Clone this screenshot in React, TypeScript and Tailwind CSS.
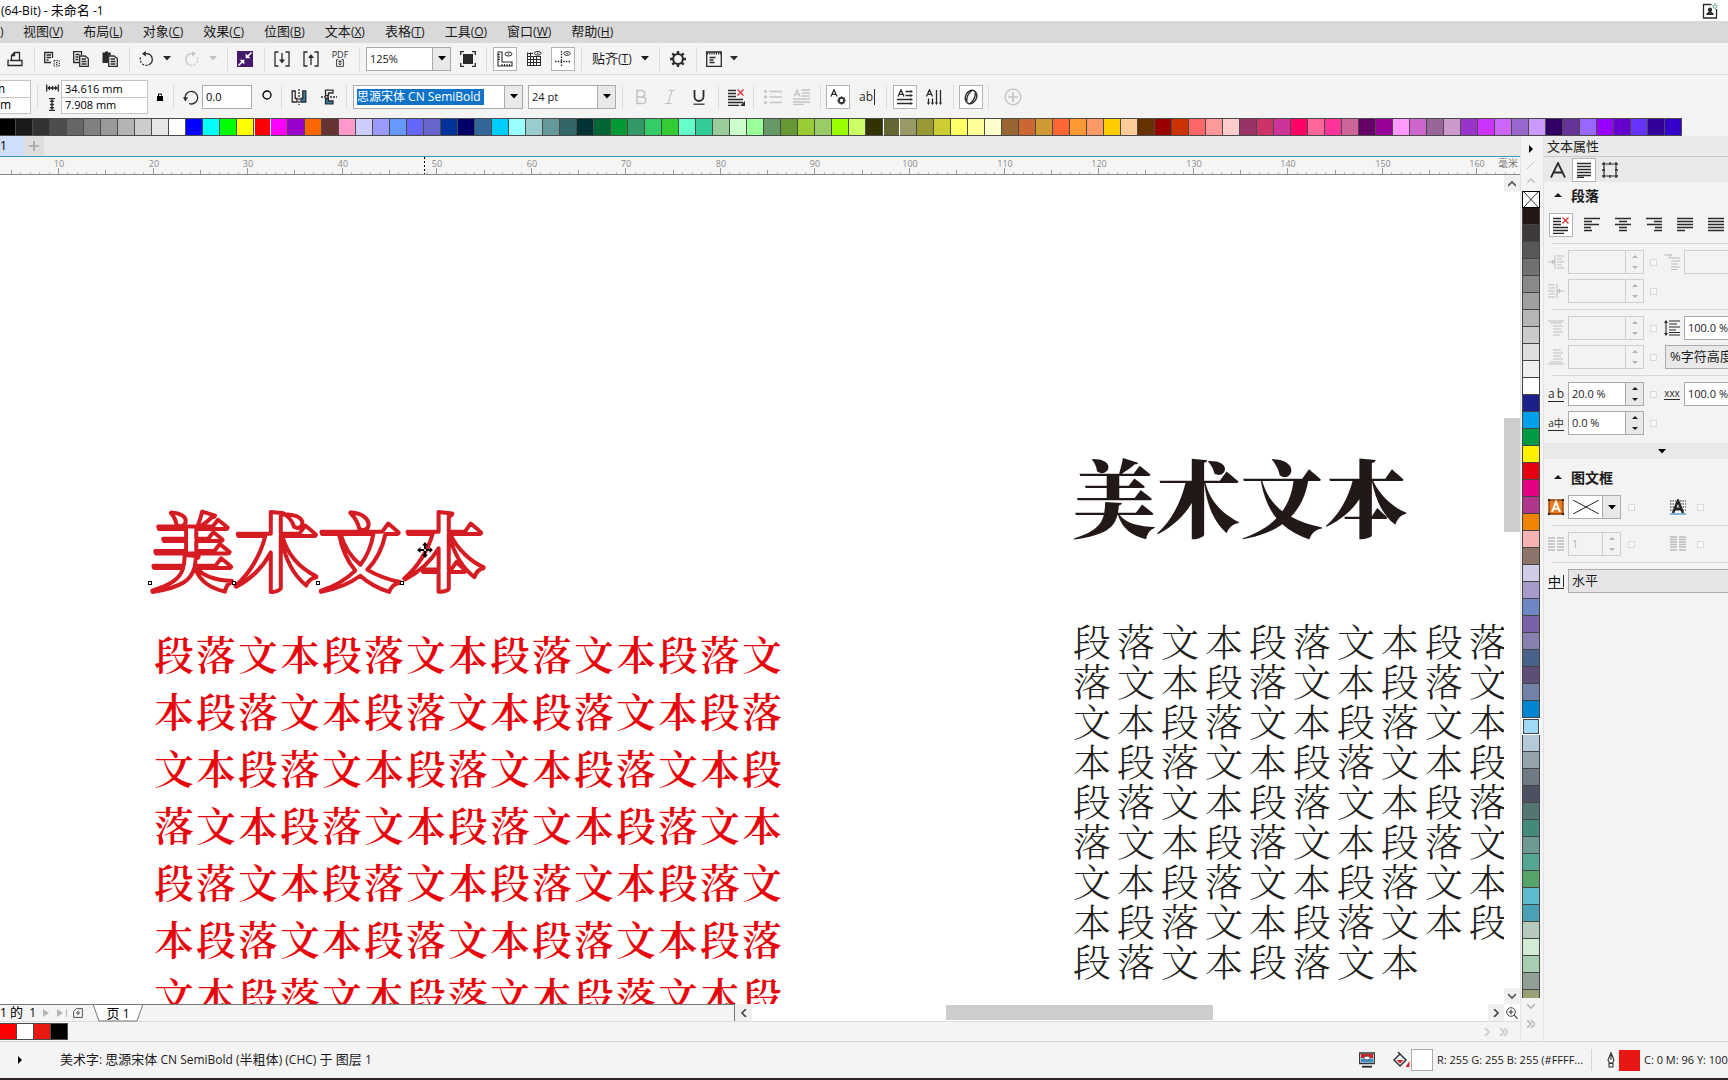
import React from 'react';

const TOP_COLORS = [
  '#000000', '#1a1a1a', '#333333', '#4d4d4d', '#666666', '#808080', '#999999', '#b3b3b3', '#cccccc', '#e6e6e6',
  '#ffffff', '#0000ff', '#00ffff', '#00ff00', '#ffff00', '#ff0000', '#ff00ff', '#9900cc', '#ff6600', '#663333',
  '#ff99cc', '#ccccff', '#9999ff', '#6699ff', '#6666ff', '#6666cc', '#003399', '#000066', '#336699', '#00ccff',
  '#99ffff', '#99cccc', '#669999', '#336666', '#003333', '#006633', '#009933', '#339966', '#33cc66', '#33cc33',
  '#66ffcc', '#33cc99', '#99cc99', '#ccffcc', '#99ff99', '#669966', '#669933', '#99cc33', '#99cc66', '#99ff00',
  '#ccff66', '#333300', '#666633', '#999966', '#999933', '#cccc33', '#ffff66', '#ffff99', '#ffffcc', '#996633',
  '#cc6633', '#cc9933', '#ff6633', '#ff9933', '#ff9966', '#ffcc00', '#ffcc99', '#663300', '#990000', '#cc3300',
  '#ff6666', '#ff9999', '#ffcccc', '#993366', '#cc3366', '#cc3399', '#ff0066', '#ff6699', '#ff3399', '#cc6699',
  '#660066', '#990099', '#ff99ff', '#cc66cc', '#996699', '#cc99cc', '#9933cc', '#cc33ff', '#cc66ff', '#9966cc',
  '#cc99ff', '#330066', '#663399', '#9966ff', '#9900ff', '#6600cc', '#6633ff', '#330099', '#3300cc',
];

const SIDE_COLORS = [
  '#231815', '#3e3a39', '#595757', '#727171', '#898989', '#9fa0a0', '#b5b5b6', '#c9caca', '#dcdddd', '#efefef',
  '#ffffff', '#1d2088', '#00a0e9', '#009944', '#fff100', '#e60012', '#e4007f', '#b0368b', '#f08300', '#f5b2b2',
  '#8c746a', '#d0cbe6', '#a59aca', '#6c87c4', '#7a62a8', '#8a80b0', '#49628c', '#5c4e75', '#7380a8', '#0086d1',
  '#9fd9f6', '#b5cad6', '#93a5ab', '#6f7b85', '#4b5160', '#537672', '#43897c', '#6f9995', '#55a795', '#56a469',
  '#5cbbcc', '#4aa0b4', '#b5cabd', '#d3ead3', '#a5cfae', '#91a096', '#9aa076',
];

const DOC_COLORS = ['#ff0000', '#ffffff', '#e8190f', '#000000'];

const MENUS = [
  ['视图', 'V'], ['布局', 'L'], ['对象', 'C'], ['效果', 'C'], ['位图', 'B'],
  ['文本', 'X'], ['表格', 'T'], ['工具', 'O'], ['窗口', 'W'], ['帮助', 'H'],
];

const LEFT_LINES = [
  '段落文本段落文本段落文本段落文',
  '本段落文本段落文本段落文本段落',
  '文本段落文本段落文本段落文本段',
  '落文本段落文本段落文本段落文本',
  '段落文本段落文本段落文本段落文',
  '本段落文本段落文本段落文本段落',
  '文本段落文本段落文本段落文本段',
];

const RIGHT_LINES = [
  '段落文本段落文本段落',
  '落文本段落文本段落文',
  '文本段落文本段落文本',
  '本段落文本段落文本段',
  '段落文本段落文本段落',
  '落文本段落文本段落文',
  '文本段落文本段落文本',
  '本段落文本段落文本段',
  '段落文本段落文本',
];

// ---------- icons ----------

interface IconProps {
  children: React.ReactNode;
  className?: string;
  box?: string;
}

const Icon: React.FC<IconProps> = ({ children, className = 'size-4', box = '0 0 16 16' }) => (
  <svg viewBox={box} className={`block shrink-0 ${className}`} fill="none" stroke="currentColor" strokeWidth="1.3" aria-hidden="true">
    {children}
  </svg>
);

const Caret = ({ className = '' }: { className?: string }) => (
  <svg viewBox="0 0 8 5" className={`block h-[5px] w-2 shrink-0 ${className}`} fill="currentColor" aria-hidden="true">
    <path d="M0 0h8L4 4.6z" />
  </svg>
);

const PrintIcon = () => (
  <Icon><path d="M4.5 9.500V4.500L7.500 1.500H12.500V9.500M7.500 1.500V4.500H4.500M2 9.500H1V14.500H15V9.500H13M3 9.500H14" /></Icon>
);
const CutIcon = () => (
  <Icon>
    <path d="M7 11.500H.7V1.500H8.500V7M2.500 4h4.500M2.500 6.500h4.500M2.500 9h2" />
    <path d="M10 9.500h5.300v5.500H10zM12 11.500h1.500M12 13.300h1.500" strokeDasharray="1.500 1" strokeWidth="1" />
  </Icon>
);
const CopyIcon = () => (
  <Icon>
    <path d="M6 11.500H.7V.7H8.500V4M2.500 3.500h4M2.500 6h3M2.500 8.500h3" />
    <path d="M6.700 5H12l3.300 2.500v7.800H6.700zM8.500 8h4.500M8.500 10.500h5M8.500 13h5" />
  </Icon>
);
const PasteIcon = () => (
  <Icon>
    <path d="M.5 1.500h2.500V.4h3V1.500h2.700V4.500H6V12H.5z" fill="currentColor" stroke="none" />
    <path d="M6.700 5H12l3.300 2.500v7.800H6.700zM8.500 8h4.500M8.500 10.500h5M8.500 13h5" />
  </Icon>
);
const UndoIcon = () => (
  <Icon>
    <path d="M7 2.700h2a5.800 5.800 0 0 1 1.500 11.200" />
    <path d="M9.500 14.300H8A6 6 0 0 1 2.500 6.500" strokeDasharray="2 1.500" />
    <path d="M7.800 0v5.400L4 2.700z" fill="currentColor" stroke="none" />
  </Icon>
);
const RedoIcon = () => (
  <Icon>
    <path d="M9 2.700H7a5.800 5.800 0 0 0-1.500 11.200" />
    <path d="M6.500 14.300H8a6 6 0 0 0 5.500-7.800" strokeDasharray="2 1.500" />
    <path d="M8.200 0v5.400L12 2.700z" fill="currentColor" stroke="none" />
  </Icon>
);
const LaunchIcon = () => (
  <Icon>
    <path d="M0 0h16v16H0z" fill="#46196b" stroke="none" />
    <path d="M14.500 1.500 10.500 5.500M1.500 14.500 5.500 10.500" stroke="#fff" strokeWidth="1.600" />
    <path d="M8.700 2.500v4.800h4.800zM2.500 8.700h4.800v4.800z" fill="#fff" stroke="none" />
  </Icon>
);
const ImportIcon = () => (
  <Icon><path d="M4.500 1H1v14h3.500M11.500 1H15v14h-3.500M8 2v9" /><path d="M5 8.500h6L8 12.500z" fill="currentColor" stroke="none" /></Icon>
);
const ExportIcon = () => (
  <Icon><path d="M4.500 1H1v14h3.500M11.500 1H15v14h-3.500M8 5v9" /><path d="M5 7h6L8 3z" fill="currentColor" stroke="none" /></Icon>
);
const PdfIcon = () => (
  <span className="flex w-4 flex-col items-center text-[9px] leading-[8px]">
    PDF
    <Icon className="size-2" box="0 0 8 8"><path d="M2.500.6H.6v6.800h6.800V.6H5.500M4 1v5M2.500 4.500 4 6l1.500-1.500M2.500 2.500h3" strokeWidth=".9" /></Icon>
  </span>
);
const FullScreenIcon = () => (
  <Icon><path d="M3 3h10v10H3z" fill="currentColor" stroke="none" /><path d="M.7 4V.7H4M12 .7h3.300V4M15.300 12v3.300H12M4 15.300H.7V12" /></Icon>
);
const RulerIcon = () => (
  <Icon>
    <path d="M1 1h4v10h10v4H1zM1 3.500h2M1 6h2M1 8.500h2M5 15v-2M7.500 15v-2M10 15v-2M12.500 15v-2" strokeWidth="1.100" />
    <ellipse cx="11.500" cy="3" rx="3.500" ry="2" strokeWidth="1" /><circle cx="11.500" cy="3" r=".8" fill="currentColor" stroke="none" />
  </Icon>
);
const GridIcon = () => (
  <Icon>
    <path d="M1 2.500h6M1 5.500h14M1 8.500h14M1 11.500h14M1 14.500h14M1.500 1.500V15M4.500 1.500V15M7.500 5.500V15M10.500 5.500V15M14.500 5.500V15" strokeWidth="1" />
    <ellipse cx="11.700" cy="2.300" rx="3.300" ry="1.800" strokeWidth="1" /><circle cx="11.700" cy="2.300" r=".7" fill="currentColor" stroke="none" />
  </Icon>
);
const GuideIcon = () => (
  <Icon>
    <path d="M6.500 0v16M0 10.500h16" strokeDasharray="1.500 1.200" />
    <ellipse cx="12" cy="2.500" rx="3.300" ry="1.800" strokeWidth="1" /><circle cx="12" cy="2.500" r=".7" fill="currentColor" stroke="none" />
  </Icon>
);
const GearIcon = () => (
  <Icon>
    <circle cx="8" cy="8" r="4.900" strokeWidth="2" />
    <path d="M8 0v3M8 13v3M0 8h3M13 8h3M2.300 2.300l2 2M11.700 11.700l2 2M13.700 2.300l-2 2M4.300 11.700l-2 2" strokeWidth="2.400" />
  </Icon>
);
const WindowIcon = () => (
  <Icon><path d="M.7 1h14.600v14.300H.7zM3.500 6.500h6M3.500 9h4M3.500 11.500h5" /><path d="M1 2.500h14" strokeWidth="2" strokeDasharray="1.200 1" /></Icon>
);
const WidthIcon = () => (
  <Icon className="h-3 w-[13px]" box="0 0 13 12"><path d="M.7 2.500v7M12.300 2.500v7M2 6h9M6.500 4v4" /><path d="M1 6l3-2.500v5zM12 6 9 3.500v5z" fill="currentColor" stroke="none" /></Icon>
);
const HeightIcon = () => (
  <Icon className="h-[13px] w-3" box="0 0 12 13"><path d="M3 .7h6M3 12.300h6M6 2v9M4 6.500h4" /><path d="M6 1 3.500 4h5zM6 12 3.500 9h5z" fill="currentColor" stroke="none" /></Icon>
);
const LockIcon = () => (
  <Icon className="h-2 w-[6px]" box="0 0 6 8"><path d="M0 3h6v5H0z" fill="currentColor" stroke="none" /><path d="M1.500 3.500V1h3v1.500" strokeWidth="1" /></Icon>
);
const RotateIcon = () => (
  <Icon><path d="M2.200 10A6.300 6.300 0 1 1 6 14.500" /><path d="M0 8.300h5L2.300 12.500z" fill="currentColor" stroke="none" /></Icon>
);
const MirrorHIcon = () => (
  <Icon><path d="M1.200 2v11H6v-3.500H4.200V2z" /><path d="M8 0v16" strokeDasharray="2 1" /><path d="M14.800 2v11H10v-3.500h1.800V2z" fill="#2b86ad" /></Icon>
);
const MirrorVIcon = () => (
  <Icon><path d="M4.500 6.500V1.200H12V4H7.500v2.500z" /><path d="M0 8h16" strokeDasharray="2 1" /><path d="M4.500 9.500v5.300H12V12H7.500V9.500z" fill="#2b86ad" /></Icon>
);
const UnderlineIcon = () => (
  <Icon><path d="M3.500 1v6.500a4.500 4.500 0 0 0 9 0V1" strokeWidth="1.800" /><path d="M2.500 15.200h11" strokeWidth="1.200" /></Icon>
);
const BoldIcon = () => (
  <Icon><path d="M4 1.500h4.500a3.200 3.200 0 0 1 0 6.400H4zM4 7.900h5.500a3.300 3.300 0 0 1 0 6.600H4z" strokeWidth="1.500" /></Icon>
);
const ItalicIcon = () => (
  <Icon><path d="M6.500 1.500H13M3 14.500h6.500M10 1.500 6 14.500" strokeWidth="1.200" /></Icon>
);
const NoAlignIcon = ({ corner = false }: { corner?: boolean }) => (
  <Icon className="h-[18px] w-[18px]" box="0 0 18 18">
    <path d="M1 2.500h8M1 5.500h8M1 8.500h8M1 11.500h15M1 14.500h15M1 17.500h11" strokeWidth="1.300" />
    <path d="m10.500 1.500 6 6M16.500 1.500l-6 6" stroke="#d33" strokeWidth="1.300" />
    {corner && <path d="M18 13v5h-5z" fill="currentColor" stroke="none" />}
  </Icon>
);
const BulletsIcon = () => (
  <Icon className="h-4 w-[18px]" box="0 0 18 16"><path d="M0 2.500h3M0 8h3M0 13.500h3" strokeWidth="2.400" /><path d="M5.500 2.500H18M5.500 8H18M5.500 13.500H18" /></Icon>
);
const DropCapIcon = () => (
  <Icon className="h-4 w-[18px]" box="0 0 18 16"><path d="M2 7.500 5 .8l3 6.700M3 5.300h4M9.500 1H18M9.500 4H18M9.500 7H18M1 10h17M1 13h17M1 15.500h11" /></Icon>
);
const CharPropsIcon = () => (
  <Icon><path d="M1 7.500 4 .8l3 6.700M2 5.300h4" /><circle cx="11.500" cy="11.500" r="2.600" strokeWidth="1.700" /><path d="M11.500 7.300v1.500M11.500 14.200v1.500M7.300 11.500h1.500M14.200 11.500h1.500M8.600 8.600l1 1M13.400 13.400l1 1M14.400 8.600l-1 1M9.600 13.400l-1 1" /></Icon>
);
const HorizTextIcon = () => (
  <Icon><path d="M1 7.500 4 .8l3 6.700M2 5.300h4M8.500 2.500H14M8.500 6.500H14M0 10.500h14M0 14.500h14" /><path d="m13.500 1 2.500 1.500-2.500 1.500zM13.500 5 16 6.500 13.500 8zM13.500 9l2.500 1.500-2.500 1.500zM13.500 13l2.500 1.500-2.500 1.500z" fill="currentColor" stroke="none" /></Icon>
);
const VertTextIcon = () => (
  <Icon><path d="M.5 7.500 3.500.8l3 6.700M1.500 5.300h4M2.500 9.500V15M6.500 9.500V15M10.500 1v14M14.500 1v14" /><path d="m9 13.500 1.500 2.500 1.500-2.500zM13 13.500l1.500 2.500 1.500-2.500zM1 13.500 2.500 16 4 13.500zM5 13.500 6.500 16 8 13.500z" fill="currentColor" stroke="none" /></Icon>
);
const OpenTypeIcon = () => (
  <Icon><ellipse cx="8" cy="8" rx="5.500" ry="7" transform="rotate(25 8 8)" strokeWidth="1.400" /><path d="M4 12.500C3 9.500 5 4.500 8.500 2M12 3.500c1 3-1 8-4.500 10.500" strokeWidth="1.400" /></Icon>
);
const PlusIcon = () => (
  <Icon className="size-[18px]" box="0 0 18 18"><circle cx="9" cy="9" r="7.800" /><path d="M9 4v10M4 9h10" strokeWidth="1.700" /></Icon>
);

type AlignKind = 'left' | 'center' | 'right' | 'justify' | 'force' | 'page';
const ALIGN_PATHS: Record<AlignKind, string> = {
  left: 'M0 1.500h16M0 4.500h8M0 7.500h15M0 10.500h7M0 13.500h8',
  center: 'M0 1.500h16M4 4.500h8M0 7.500h16M4 10.500h8M4 13.500h8',
  right: 'M0 1.500h16M8 4.500h8M1 7.500h15M9 10.500h7M8 13.500h8',
  justify: 'M0 1.500h16M0 4.500h16M0 7.500h16M0 10.500h16M0 13.500h8',
  force: 'M0 1.500h16M0 4.500h16M0 7.500h16M0 10.500h16M0 13.500h16',
  page: 'M1 1.500h14M1 4.500h14M1 7.500h14M1 10.500h14M1 13.500h14M1 15.500h7',
};
const AlignIcon = ({ kind }: { kind: AlignKind }) => (
  <Icon><path d={ALIGN_PATHS[kind]} strokeWidth="1.300" /></Icon>
);

const IndentIcon = ({ d }: { d: string }) => <Icon><path d={d} strokeWidth="1.100" /></Icon>;

const INDENT_LEFT = 'M0 8h6M4 6l2 2-2 2M7 1v14M9 2h7M9 5h5M9 8h7M9 11h5M9 14h7';
const INDENT_RIGHT = 'M16 8h-5M12 6l-2 2 2 2M9 1v14M0 2h7M1 5h6M0 8h7M1 11h6M0 14h7';
const INDENT_FIRST = 'M0 1h8M6 0v3M4 4h12M7 7h9M7 10h7M7 13h9M7 15.500h6';
const SPACE_BEFORE = 'M0 1h16M2 3h12M5 6h10M5 9h8M5 12h10M5 15h7';
const SPACE_AFTER = 'M0 15h16M2 13h12M5 1h8M5 4h10M5 7h8M5 10h10';
const LINE_SPACE = 'M2 1v14M.5 3 2 1l1.500 2M.5 13 2 15l1.500-2M5 1h11M5 4h8M5 7h11M5 10h7M5 12.500h11M5 15h11';

// ---------- building blocks ----------

const Group = ({ children, className = 'gap-[13px] pl-[9px] pr-[11px]' }: { children: React.ReactNode; className?: string }) => (
  <div className={`flex h-6 shrink-0 items-center border-r border-[#dcdcdc] ${className}`}>{children}</div>
);

interface ToolProps {
  label: string;
  framed?: boolean;
  disabled?: boolean;
  children: React.ReactNode;
}

const Tool: React.FC<ToolProps> = ({ label, framed, disabled, children }) => (
  <button
    type="button"
    aria-label={label}
    disabled={disabled}
    className={`flex shrink-0 items-center justify-center ${framed ? 'size-6 border border-[#b4b4b4] bg-white' : 'h-6 min-w-2'} ${disabled ? 'text-[#c4c4c4]' : 'text-[#2b2b2b]'}`}
  >
    {children}
  </button>
);

const Combo = ({ label, value, className, buttonClass = 'w-[18px]', selected = false }: { label: string; value: string; className: string; buttonClass?: string; selected?: boolean }) => (
  <div className={`flex h-6 shrink-0 border border-[#ababab] bg-white ${className}`}>
    <div className="flex min-w-0 flex-1 items-center pl-[3px]">
      <input
        aria-label={label}
        defaultValue={value}
        className={selected ? 'w-[127px] bg-[#0f74c8] text-[12px] leading-4 text-white' : 'w-full min-w-0 bg-transparent text-[11px] leading-4 text-[#1a1a1a]'}
      />
    </div>
    <button type="button" aria-label={`${label} 列表`} className={`flex items-center justify-center border-l border-[#ababab] bg-[#e9e9e9] ${buttonClass}`}>
      <Caret />
    </button>
  </div>
);

const Spin = ({ label, value = '', disabled = false, className = 'w-[76px]' }: { label: string; value?: string; disabled?: boolean; className?: string }) => (
  <div className={`flex h-6 shrink-0 border ${disabled ? 'border-[#cfcfcf] text-[#b5b5b5]' : 'border-[#ababab] bg-white text-[#1a1a1a]'} ${className}`}>
    <input aria-label={label} defaultValue={value} disabled={disabled} className="min-w-0 flex-1 bg-transparent pl-[3px] text-[11px] leading-4" />
    <div className={`flex w-[18px] shrink-0 flex-col border-l ${disabled ? 'border-[#cfcfcf]' : 'border-[#ababab] bg-[#e9e9e9]'}`}>
      <button type="button" aria-label={`${label} 增加`} disabled={disabled} className="flex flex-1 items-center justify-center">
        <svg viewBox="0 0 6 3" className="h-[3px] w-[6px]" fill="currentColor"><path d="M3 0l3 3H0z" /></svg>
      </button>
      <button type="button" aria-label={`${label} 减少`} disabled={disabled} className="flex flex-1 items-center justify-center">
        <svg viewBox="0 0 6 3" className="h-[3px] w-[6px]" fill="currentColor"><path d="M0 0h6L3 3z" /></svg>
      </button>
    </div>
  </div>
);

const Tick = ({ label, className = 'ml-[6px]' }: { label: string; className?: string }) => (
  <input type="checkbox" aria-label={label} className={`size-[7px] shrink-0 appearance-none border border-[#dadada] bg-[#f8f8f8] ${className}`} />
);

const Rule = () => <div className="my-[6px] ml-2 h-px bg-[#d6d6d6]" />;

const Chevron = ({ d }: { d: string }) => (
  <svg viewBox="0 0 8 8" className="block size-2" fill="none" stroke="currentColor" strokeWidth="1.700" aria-hidden="true"><path d={d} /></svg>
);

// ---------- top of the window ----------

const TitleBar = () => (
  <header className="flex h-[21px] shrink-0 items-center justify-between bg-white pl-px pr-[10px] text-[12px]">
    <h1>(64-Bit) - <span className="text-[13px]">未命名</span> -1</h1>
    <button type="button" aria-label="登录" className="text-[#2b2b2b]">
      <Icon>
        <path d="M9.500 1.500H1.500v13.500h13V6" />
        <path d="M8 4.500a2.300 2.300 0 0 1 1 4.300l2.500 1.400v1.800h-7v-1.800L7 8.800a2.300 2.300 0 0 1 1-4.300z" fill="currentColor" stroke="none" />
        <path d="M11.500 2a2 2 0 1 0 3 0M13 0v3" stroke="#3f9d83" strokeWidth="1" />
      </Icon>
    </button>
  </header>
);

const MenuBar = () => (
  <nav className="flex h-[22px] shrink-0 items-center gap-5 bg-[#d9d9d9] text-[12px] text-[#1a1a1a]">
    <span className="w-[3px] shrink-0">)</span>
    {MENUS.map(([name, key]) => (
      <button key={name} type="button" className="shrink-0 whitespace-nowrap text-left">
        <span className="text-[13px]">{name}</span>(<u>{key}</u>)
      </button>
    ))}
  </nav>
);

const StandardBar = () => (
  <div className="flex h-8 shrink-0 items-center overflow-hidden border-b border-[#dcdcdc]">
    <Group className="pl-[7px] pr-[11px]"><Tool label="打印"><PrintIcon /></Tool></Group>
    <Group>
      <Tool label="剪切"><CutIcon /></Tool>
      <Tool label="复制"><CopyIcon /></Tool>
      <Tool label="粘贴"><PasteIcon /></Tool>
    </Group>
    <Group className="gap-[9px] pl-[8px] pr-[10px]">
      <Tool label="撤消"><UndoIcon /></Tool>
      <Tool label="撤消列表"><Caret className="mr-1" /></Tool>
      <Tool label="重做" disabled><RedoIcon /></Tool>
      <Tool label="重做列表" disabled><Caret /></Tool>
    </Group>
    <Group><Tool label="应用程序启动器"><LaunchIcon /></Tool></Group>
    <Group>
      <Tool label="导入"><ImportIcon /></Tool>
      <Tool label="导出"><ExportIcon /></Tool>
      <Tool label="发布为 PDF"><PdfIcon /></Tool>
    </Group>
    <Group className="gap-[9px] pl-[6px] pr-[10px]">
      <Combo label="缩放级别" value="125%" className="w-[85px]" />
      <Tool label="全屏预览"><FullScreenIcon /></Tool>
    </Group>
    <Group className="gap-[9px] px-[6px]">
      <Tool label="显示标尺" framed><RulerIcon /></Tool>
      <Tool label="显示网格"><GridIcon /></Tool>
      <Tool label="显示辅助线" framed><GuideIcon /></Tool>
    </Group>
    <Group className="px-[10px]">
      <button type="button" className="flex items-center gap-[9px] whitespace-nowrap text-[12px] text-[#1a1a1a]">
        <span><span className="text-[13px]">贴齐</span>(<u>T</u>)</span>
        <Caret />
      </button>
    </Group>
    <Group className="px-[10px]"><Tool label="选项"><GearIcon /></Tool></Group>
    <div className="flex items-center gap-2 pl-[9px]">
      <Tool label="窗口"><WindowIcon /></Tool>
      <Tool label="窗口列表"><Caret /></Tool>
    </div>
  </div>
);

const PropertyBar = () => (
  <div className="flex h-[43px] shrink-0 items-center overflow-hidden">
    <Group className="pr-[6px]">
      <div className="flex w-[31px] flex-col border border-l-0 border-[#c4c4c4] bg-white text-[12px]">
        <input aria-label="X 位置" defaultValue="m" className="h-4 w-full -indent-[6px] leading-4" />
        <input aria-label="Y 位置" defaultValue="m" className="h-4 w-full border-t border-[#c4c4c4] leading-4" />
      </div>
    </Group>
    <Group className="pl-[8px] pr-[10px]">
      <div className="flex w-[15px] flex-col gap-1 text-[#2b2b2b]"><WidthIcon /><HeightIcon /></div>
      <div className="flex w-[87px] flex-col border border-[#c4c4c4] bg-white text-[11px]">
        <input aria-label="对象宽度" defaultValue="34.616 mm" className="h-4 w-full pl-[3px] leading-4" />
        <input aria-label="对象高度" defaultValue="7.908 mm" className="h-4 w-full border-t border-[#c4c4c4] pl-[3px] leading-4" />
      </div>
      <button type="button" aria-label="锁定比率" className="ml-[9px]"><LockIcon /></button>
    </Group>
    <Group className="px-[9px]">
      <span className="text-[#2b2b2b]"><RotateIcon /></span>
      <input aria-label="旋转角度" defaultValue="0.0" className="ml-[3px] h-6 w-[50px] border border-[#ababab] bg-white pl-[3px] text-[11px]" />
      <Icon className="mb-1 ml-[10px] size-[10px]" box="0 0 10 10"><circle cx="5" cy="5" r="4" /></Icon>
    </Group>
    <Group className="gap-[14px] px-[9px]">
      <Tool label="水平镜像"><MirrorHIcon /></Tool>
      <Tool label="垂直镜像"><MirrorVIcon /></Tool>
    </Group>
    <Group className="gap-[5px] px-[6px]">
      <Combo label="字体" value="思源宋体 CN SemiBold" className="w-[170px]" selected />
      <Combo label="字体大小" value="24 pt" className="w-[88px]" />
    </Group>
    <Group className="gap-[13px] pl-[10px] pr-[11px]">
      <Tool label="粗体" disabled><BoldIcon /></Tool>
      <Tool label="斜体" disabled><ItalicIcon /></Tool>
      <Tool label="下划线"><UnderlineIcon /></Tool>
    </Group>
    <Group className="px-[8px]"><Tool label="文本对齐"><NoAlignIcon corner /></Tool></Group>
    <Group className="gap-[10px] px-[10px]">
      <Tool label="项目符号" disabled><BulletsIcon /></Tool>
      <Tool label="首字下沉" disabled><DropCapIcon /></Tool>
    </Group>
    <Group className="gap-[9px] pl-[5px] pr-[11px]">
      <Tool label="文本属性" framed><CharPropsIcon /></Tool>
      <Tool label="编辑文本"><span className="border-r border-[#2b2b2b] pr-px text-[12px] leading-4">ab</span></Tool>
    </Group>
    <Group className="gap-[9px] pl-[6px] pr-[11px]">
      <Tool label="水平文本" framed><HorizTextIcon /></Tool>
      <Tool label="垂直文本"><VertTextIcon /></Tool>
    </Group>
    <Group className="px-[5px]"><Tool label="OpenType" framed><OpenTypeIcon /></Tool></Group>
    <div className="pl-[15px]"><Tool label="添加" disabled><PlusIcon /></Tool></div>
  </div>
);

const TopPalette = () => (
  <div className="flex h-[18px] shrink-0 overflow-hidden">
    {TOP_COLORS.map((color, i) => (
      <button
        key={color}
        type="button"
        aria-label={color}
        className={`shrink-0 border-y border-[#4a4a4a] ${i === 0 ? 'w-4' : 'w-[17px]'} ${color === '#ff0000' || color === '#666633' ? 'border-x border-x-white' : 'border-r border-r-[#4a4a4a]'}`}
        style={{ backgroundColor: color }}
      />
    ))}
  </div>
);

// ---------- drawing window ----------

const RULER_START = 58;
const RULER_STEP = 94.56;

const Ruler = () => {
  const ticks = Array.from({ length: 160 }, (_, i) => i - 5);
  const labels = Array.from({ length: 16 }, (_, i) => i);
  return (
    <div className="h-[18px] shrink-0 overflow-hidden border-b border-[#8a8a8a] bg-[#f5f5f5]">
      <svg className="block h-[17px] w-full" aria-label="标尺">
        {ticks.map((t) => {
          const x = Math.round(RULER_START + (t * RULER_STEP) / 10) + 0.5;
          const top = t % 10 === 0 ? 11 : t % 5 === 0 ? 13 : 15;
          return <line key={t} x1={x} x2={x} y1={top} y2={17} stroke={t % 5 === 0 ? '#999' : '#bbb'} />;
        })}
        {labels.map((n) => (
          <text key={n} x={Math.round(RULER_START + n * RULER_STEP) + 1} y={10} textAnchor="middle" fontSize={9} fill="#8a8a8a">
            {(n + 1) * 10}
          </text>
        ))}
        <text x={1498} y={10} fontSize={10} fill="#777">毫米</text>
        <line x1={424.5} x2={424.5} y1={0} y2={17} stroke="#000" strokeDasharray="2 2" />
      </svg>
    </div>
  );
};

const Canvas = () => (
  <div className="relative min-w-0 flex-1 overflow-hidden bg-white font-['Noto_Serif_CJK_SC','Noto_Sans_CJK_SC',serif] whitespace-nowrap">
    <svg className="absolute left-[140px] top-[320px] h-[110px] w-[360px]">
      <text x={10} y={89} fontSize={84} fontWeight={700} fill="#fff" stroke="#d51c22" strokeWidth={4} strokeLinejoin="round">美术文本</text>
    </svg>
    {['left-[148px]', 'left-[232px]', 'left-[316px]', 'left-[400px]'].map((left) => (
      <span key={left} className={`absolute top-[406px] size-1 border border-black bg-white ${left}`} />
    ))}
    <svg viewBox="0 0 16 16" className="absolute left-[417px] top-[367px] size-4" aria-hidden="true">
      <path d="M8 0l3 3.500H9V7h3.500V5L16 8l-3.500 3V9H9v3.500h2L8 16l-3-3.500h2V9H3.500v2L0 8l3.500-3v2H7V3.500H5z" fill="#000" />
      <circle cx="8" cy="8" r="1" fill="#fff" />
    </svg>
    <div className="absolute left-[154px] top-[449px] text-[40px] leading-[57px] font-semibold tracking-[2px] text-[#e8060d]">
      {LEFT_LINES.map((line, i) => <p key={i}>{line}</p>)}
    </div>
    <p className="absolute left-[1072px] top-[278px] text-[84px] leading-none font-black text-[#231818]">美术文本</p>
    <div className="absolute left-[1073px] top-[445px] text-[38px] leading-[40px] font-light tracking-[6px] text-[#231f20]">
      {RIGHT_LINES.map((line, i) => <p key={i}>{line}</p>)}
    </div>
  </div>
);

const PageBar = () => (
  <div className="flex h-[18px] shrink-0 border-b border-[#dcdcdc] bg-white">
    <div className="flex w-[735px] shrink-0 items-center border-t border-r border-[#777] bg-[#f4f4f4] text-[12px]">
      <span className="w-[42px] shrink-0 whitespace-nowrap">1 <span className="text-[13px]">的</span>&nbsp; 1</span>
      <button type="button" aria-label="下一页" className="text-[#b5b5b5]">
        <svg viewBox="0 0 8 8" className="size-2" fill="currentColor"><path d="M1 0l6 4-6 4z" /></svg>
      </button>
      <button type="button" aria-label="最后一页" className="ml-[6px] text-[#b5b5b5]">
        <svg viewBox="0 0 12 8" className="h-2 w-3" fill="currentColor"><path d="M1 0l6 4-6 4zM10 0h1v8h-1z" /></svg>
      </button>
      <button type="button" aria-label="添加页" className="ml-[5px] text-[#555]">
        <Icon className="size-[10px]" box="0 0 10 10"><path d="M3.500.6h5.900v8.800H.6v-6zM5 3v4M3 5h4" strokeWidth="1" /></Icon>
      </button>
      <div className="relative ml-[10px] h-[17px] w-[50px]">
        <svg viewBox="0 0 50 17" className="absolute inset-0 h-full w-full" aria-hidden="true">
          <path d="M0 -1 6 16H44L50 -1" fill="#fff" stroke="#777" />
        </svg>
        <button type="button" className="relative w-full text-center leading-4"><span className="text-[13px]">页</span> 1</button>
      </div>
    </div>
    <div className="flex min-w-0 flex-1 items-center">
      <button type="button" aria-label="向左滚动" className="flex h-full w-[17px] items-center justify-center bg-[#f0f0f0] text-[#444]"><Chevron d="M6 0 2 4l4 4" /></button>
      <div className="flex h-[15px] flex-1"><div className="ml-[26.4%] w-[36.3%] bg-[#cdcdcd]" /></div>
      <button type="button" aria-label="向右滚动" className="flex h-full w-4 items-center justify-center bg-[#f0f0f0] text-[#444]"><Chevron d="M2 0l4 4-4 4" /></button>
      <button type="button" aria-label="导航器" className="flex w-4 justify-center text-[#444]">
        <Icon className="size-3" box="0 0 12 12"><circle cx="5" cy="5" r="4.300" strokeWidth="1" /><path d="m8.200 8.200 3.500 3.500M5 2.500v5M2.500 5h5" strokeWidth="1.200" /></Icon>
      </button>
    </div>
  </div>
);

const DocumentPalette = () => (
  <div className="flex h-[19px] shrink-0 items-center justify-between bg-[#f4f4f4]">
    <div className="flex">
      {DOC_COLORS.map((color) => (
        <button key={color} type="button" aria-label={color} className="size-[17px] border border-l-0 border-[#4a4a4a]" style={{ backgroundColor: color }} />
      ))}
    </div>
    <div className="flex gap-[9px] pr-3 text-[#c8c8c8]">
      <Chevron d="M2 0l4 4-4 4" />
      <Chevron d="M0 0l4 4-4 4M4 0l4 4-4 4" />
    </div>
  </div>
);

const DrawingWindow = () => (
  <main className="flex min-w-0 flex-1 flex-col">
    <div className="flex h-5 shrink-0 bg-[#e9e9e9] text-[12px]">
      <button type="button" className="w-6 bg-[#cfdffb] text-left leading-4">1</button>
      <button type="button" aria-label="新建文档" className="flex w-5 items-center justify-center bg-[#dedede] text-[#a5a5a5]">
        <Icon className="size-[10px]" box="0 0 10 10"><path d="M5 0v10M0 5h10" strokeWidth="1.700" /></Icon>
      </button>
    </div>
    <div className="h-px shrink-0 bg-[#3b93c4]" />
    <Ruler />
    <div className="flex min-h-0 flex-1">
      <Canvas />
      <div className="flex w-4 shrink-0 flex-col bg-white text-[#555]">
        <button type="button" aria-label="向上滚动" className="flex h-[17px] items-center justify-center bg-[#f0f0f0]"><Chevron d="M0 6l4-4 4 4" /></button>
        <div className="flex-1"><div className="mt-[226px] h-[114px] bg-[#cdcdcd]" /></div>
        <button type="button" aria-label="向下滚动" className="flex h-4 items-center justify-center bg-[#f0f0f0]"><Chevron d="M0 2l4 4 4-4" /></button>
      </div>
    </div>
    <PageBar />
    <DocumentPalette />
  </main>
);

const SidePalette = () => (
  <div className="flex w-6 shrink-0 flex-col overflow-hidden border-x border-[#e2e2e2] bg-[#f4f4f4] pl-px">
    <div className="flex h-[55px] w-[18px] shrink-0 flex-col items-center justify-end gap-2 pb-[6px] text-[#c8c8c8]">
      <button type="button" aria-label="展开调色板" className="text-black"><svg viewBox="0 0 4 8" className="block h-2 w-1" fill="currentColor"><path d="M0 0l4 4-4 4z" /></svg></button>
      <svg viewBox="0 0 8 8" className="size-2" fill="none" stroke="currentColor"><path d="M0 8 8 0" /></svg>
      <Chevron d="M0 6l4-4 4 4" />
    </div>
    <div className="flex min-h-0 w-[18px] flex-1 flex-col overflow-hidden">
      <button type="button" aria-label="无填充" className="h-[17px] shrink-0 border border-black bg-white">
        <svg viewBox="0 0 16 15" className="block h-full w-full" stroke="#000" strokeWidth=".8"><path d="M1 0l14 15M15 0 1 15" /></svg>
      </button>
      {SIDE_COLORS.map((color) => (
        <button
          key={color}
          type="button"
          aria-label={color}
          className={`h-[17px] shrink-0 ${color === '#9fd9f6' ? 'border border-white inset-ring inset-ring-[#444]' : 'border-x border-b border-[#444]'}`}
          style={{ backgroundColor: color }}
        />
      ))}
    </div>
    <div className="flex h-[43px] w-[18px] shrink-0 flex-col items-center gap-[10px] pt-1 text-[#b9b9b9]">
      <Chevron d="M0 2l4 4 4-4" />
      <Chevron d="M0 0l4 4-4 4M4 0l4 4-4 4" />
    </div>
  </div>
);

// ---------- text properties docker ----------

const DockRow = ({ children, className = '' }: { children: React.ReactNode; className?: string }) => (
  <div className={`flex h-6 items-center pl-[4px] ${className}`}>{children}</div>
);

const SectionTitle = ({ children }: { children: React.ReactNode }) => (
  <button type="button" className="flex h-[26px] w-full items-center gap-[9px] pl-[10px] text-left text-[14px] font-bold text-[#1a1a1a]">
    <svg viewBox="0 0 8 4" className="h-1 w-2" fill="currentColor"><path d="M4 0 8 4H0z" /></svg>
    {children}
  </button>
);

const TextDocker = () => (
  <aside className="w-[184px] shrink-0 overflow-hidden whitespace-nowrap bg-[#f3f3f3]">
    <h2 className="h-[21px] border-b border-[#c9c9c9] bg-[#e9e9e9] pl-[3px] text-[13px] leading-5 text-[#1a1a1a]">文本属性</h2>
    <div className="flex h-[25px] items-center gap-[6px] bg-[#e9e9e9] pl-[6px]">
      <Tool label="字符"><Icon><path d="M1 15.500 8 1l7 14.500M3.500 10.500h9" strokeWidth="1.800" /></Icon></Tool>
      <Tool label="段落" framed><AlignIcon kind="page" /></Tool>
      <Tool label="图文框">
        <Icon><path d="M2 2h12v12H2z" strokeWidth="1.200" /><path d="M0 2h2V0M14 0v2h2M16 14h-2v2M2 16v-2H0M8 0v3M8 13v3M0 8h3M13 8h3" strokeWidth="1.300" /></Icon>
      </Tool>
    </div>

    <SectionTitle>段落</SectionTitle>
    <div className="flex h-[35px] items-center gap-[11px] pb-px pl-[5px]">
      <Tool label="无对齐" framed><NoAlignIcon /></Tool>
      <div className="flex gap-[15px]">
        <Tool label="左对齐"><AlignIcon kind="left" /></Tool>
        <Tool label="居中"><AlignIcon kind="center" /></Tool>
        <Tool label="右对齐"><AlignIcon kind="right" /></Tool>
        <Tool label="两端对齐"><AlignIcon kind="justify" /></Tool>
        <Tool label="强制对齐"><AlignIcon kind="force" /></Tool>
      </div>
    </div>
    <div className="mb-[6px] ml-2 h-px bg-[#d6d6d6]" />

    <div className="flex flex-col gap-[5px] text-[#bdbdbd]">
      <DockRow className="gap-[4px]">
        <IndentIcon d={INDENT_LEFT} />
        <Spin label="左行缩进" disabled />
        <Tick label="左行缩进样式" className="ml-[2px]" />
        <span className="ml-[3px]"><IndentIcon d={INDENT_FIRST} /></span>
        <Spin label="首行缩进" disabled />
      </DockRow>
      <DockRow className="gap-[4px]">
        <IndentIcon d={INDENT_RIGHT} />
        <Spin label="右行缩进" disabled />
        <Tick label="右行缩进样式" className="ml-[2px]" />
      </DockRow>
    </div>
    <Rule />
    <div className="flex flex-col gap-[5px] text-[#bdbdbd]">
      <DockRow className="gap-[4px]">
        <IndentIcon d={SPACE_BEFORE} />
        <Spin label="段前间距" disabled />
        <Tick label="段前间距样式" className="ml-[2px]" />
        <span className="ml-[3px] text-[#2b2b2b]"><IndentIcon d={LINE_SPACE} /></span>
        <Spin label="行间距" value="100.0 %" />
      </DockRow>
      <DockRow className="gap-[4px]">
        <IndentIcon d={SPACE_AFTER} />
        <Spin label="段后间距" disabled />
        <Tick label="段后间距样式" className="ml-[2px]" />
        <select aria-label="间距单位" className="ml-[4px] h-6 w-[110px] shrink-0 appearance-none border border-[#ababab] bg-[#e9e9e9] pl-1 text-[13px] text-[#1a1a1a]">
          <option>%字符高度</option>
        </select>
      </DockRow>
    </div>
    <Rule />
    <div className="flex flex-col gap-[5px] text-[#2b2b2b]">
      <DockRow className="gap-[4px]">
        <span className="flex w-4 shrink-0 justify-between border-b border-current text-[12px] leading-[14px]"><span>a</span><span>b</span></span>
        <Spin label="字符间距" value="20.0 %" />
        <Tick label="字符间距样式" className="ml-[2px]" />
        <span className="ml-[3px] w-4 shrink-0 border-b border-current text-center text-[10px] leading-[11px]">xxx</span>
        <Spin label="字间距" value="100.0 %" />
      </DockRow>
      <DockRow className="gap-[4px]">
        <span className="w-4 shrink-0 border-b border-current text-center text-[10px] leading-[14px]">a中</span>
        <Spin label="语言间距" value="0.0 %" />
        <Tick label="语言间距样式" className="ml-[2px]" />
      </DockRow>
    </div>
    <button type="button" aria-label="更多段落选项" className="mt-2 flex h-4 w-full items-center bg-[#e9e9e9] pl-[114px]"><Caret /></button>

    <div className="py-[5px]"><SectionTitle>图文框</SectionTitle></div>
    <DockRow>
      <Icon><path d="M1 1h14v14H1z" fill="#ee7a1d" stroke="#8a3b00" /><path d="M0 0h2v2H0zM14 0h2v2h-2zM0 14h2v2H0zM14 14h2v2h-2z" fill="#222" stroke="none" /><path d="M4 13 8 3l4 10M5.500 9.800h5" stroke="#fff" strokeWidth="2" /></Icon>
      <div className="ml-[4px] flex h-6 w-[53px] shrink-0 border border-[#ababab] bg-white">
        <button type="button" aria-label="背景颜色" className="flex flex-1 items-center justify-center">
          <svg viewBox="0 0 26 14" className="h-[14px] w-[26px]" stroke="#222"><path d="M0 0l26 14M26 0 0 14" /></svg>
        </button>
        <button type="button" aria-label="背景颜色列表" className="flex w-[18px] items-center justify-center border-l border-[#ababab] bg-[#e9e9e9]"><Caret /></button>
      </div>
      <Tick label="背景颜色样式" className="ml-[7px]" />
      <span className="ml-[35px] text-[#222]">
        <Icon><path d="M0 2h16M0 5h16M0 8h16M0 11h16" strokeDasharray="1.500 1" strokeWidth="1" /><path d="M3 14 8 1.500 13 14M5 10h6" strokeWidth="2.400" /><path d="M0 15h16" stroke="#3b93c4" /></Icon>
      </span>
      <Tick label="对齐基线" className="ml-[11px]" />
    </DockRow>
    <Rule />
    <DockRow className="text-[#bdbdbd]">
      <Icon><path d="M0 2h7M0 5h7M0 8h7M0 11h7M0 14h7M9 2h7M9 5h7M9 8h7M9 11h7M9 14h7" /></Icon>
      <Spin label="栏数" value="1" disabled className="ml-[4px] w-[53px]" />
      <Tick label="栏数样式" className="ml-[7px]" />
      <span className="ml-[35px]">
        <Icon><path d="M0 1h7M0 3.500h7M0 6h7M0 8.500h7M0 11h7M0 14h7M9 1h7M9 3.500h7M9 6h7M9 8.500h7M9 11h7M9 14h7" /></Icon>
      </span>
      <Tick label="栏设置" className="ml-[11px]" />
    </DockRow>
    <Rule />
    <DockRow className="gap-[4px]">
      <span className="flex w-4 shrink-0 items-center justify-between border-b border-[#2b2b2b] text-[13px] leading-[14px]">中<span className="h-3 w-px bg-[#2b2b2b]" /></span>
      <select aria-label="文本方向" className="h-6 w-[190px] shrink-0 appearance-none border border-[#ababab] bg-[#e6e4e7] pl-[3px] text-[13px] text-[#1a1a1a]">
        <option>水平</option>
      </select>
    </DockRow>
  </aside>
);

const StatusBar = () => (
  <footer className="flex h-[39px] shrink-0 items-center overflow-hidden whitespace-nowrap border-t border-b-2 border-t-[#d6d6d6] border-b-[#2a2225] bg-[#f4f4f4] text-[12px] text-[#1a1a1a]">
    <button type="button" aria-label="状态栏菜单" className="w-[42px] shrink-0 pl-[18px] text-black">
      <svg viewBox="0 0 4 8" className="h-2 w-1" fill="currentColor"><path d="M0 0l4 4-4 4z" /></svg>
    </button>
    <p className="flex-1 pl-[18px]">
      <span className="text-[13px]">美术字</span>: <span className="text-[13px]">思源宋体</span> CN SemiBold (<span className="text-[13px]">半粗体</span>) (CHC) <span className="text-[13px]">于 图层</span> 1
    </p>
    <Icon>
      <path d="M.7 1h14.600v10.500H.7z" fill="#fff" stroke="#333" /><path d="M2 2h12v4H2z" fill="#c8202c" stroke="none" /><path d="M2 6.500h12v4H2z" fill="#3d8fc4" stroke="none" />
      <ellipse cx="8" cy="6" rx="3" ry="1.800" fill="#fff" stroke="#555" strokeWidth=".8" /><path d="M3 14.700h10" stroke="#222" strokeWidth="1.800" />
    </Icon>
    <div className="ml-[18px] flex w-[199px] items-center border-r border-[#d6d6d6]">
      <Icon className="h-4 w-[17px] text-[#333]" box="0 0 17 16"><path d="M7 2 1 8l6 6 6-6zM5 0l4 4" strokeWidth="1.500" /><path d="M3.500 8h7L7 11.500z" fill="#d9202a" stroke="none" /><path d="M16.500 9v6h-4z" fill="#d9202a" stroke="none" /></Icon>
      <span className="ml-px size-[22px] border border-[#ababab] bg-white" />
      <span className="ml-[4px] text-[11px]">R: 255 G: 255 B: 255 (#FFFF...</span>
    </div>
    <div className="flex w-[136px] shrink-0 items-center pl-[15px]">
      <Icon className="h-4 w-2 text-[#333]" box="0 0 8 16"><path d="M4 .8 7 8l-1.500 3h-3L1 8zM4 3v5M2 11.500h4v3.500H2z" strokeWidth="1.100" /></Icon>
      <span className="ml-[4px] size-[21px] shrink-0 bg-[#e81713]" />
      <span className="ml-[4px] text-[11px]">C: 0 M: 96 Y: 100</span>
    </div>
  </footer>
);

export default function App() {
  return (
    <div className="flex h-screen flex-col overflow-hidden bg-[#f4f4f4] font-['Open_Sans','Noto_Sans_CJK_SC',sans-serif] text-black">
      <TitleBar />
      <MenuBar />
      <StandardBar />
      <PropertyBar />
      <TopPalette />
      <div className="flex min-h-0 flex-1">
        <DrawingWindow />
        <SidePalette />
        <TextDocker />
      </div>
      <StatusBar />
    </div>
  );
}
